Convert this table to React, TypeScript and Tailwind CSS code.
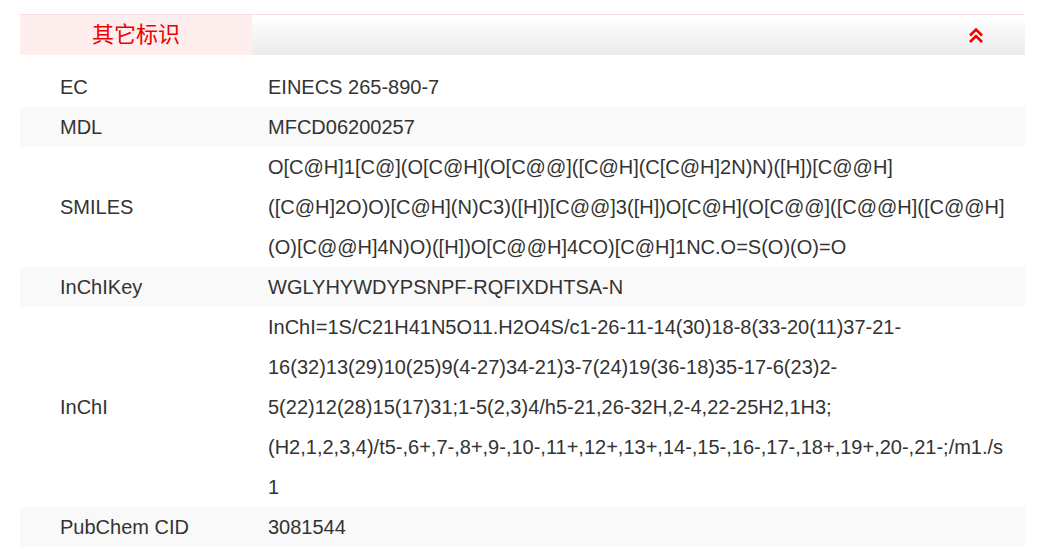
import React from 'react';

interface Row {
  label: string;
  value: string;
}

const rows: Row[] = [
  { label: 'EC', value: 'EINECS 265-890-7' },
  { label: 'MDL', value: 'MFCD06200257' },
  {
    label: 'SMILES',
    value:
      'O[C@H]1[C@](O[C@H](O[C@@]([C@H](C[C@H]2N)N)([H])[C@@H]([C@H]2O)O)[C@H](N)C3)([H])[C@@]3([H])O[C@H](O[C@@]([C@@H]([C@@H](O)[C@@H]4N)O)([H])O[C@@H]4CO)[C@H]1NC.O=S(O)(O)=O',
  },
  { label: 'InChIKey', value: 'WGLYHYWDYPSNPF-RQFIXDHTSA-N' },
  {
    label: 'InChI',
    value:
      'InChI=1S/C21H41N5O11.H2O4S/c1-26-11-14(30)18-8(33-20(11)37-21-16(32)13(29)10(25)9(4-27)34-21)3-7(24)19(36-18)35-17-6(23)2-5(22)12(28)15(17)31;1-5(2,3)4/h5-21,26-32H,2-4,22-25H2,1H3;(H2,1,2,3,4)/t5-,6+,7-,8+,9-,10-,11+,12+,13+,14-,15-,16-,17-,18+,19+,20-,21-;/m1./s1',
  },
  { label: 'PubChem CID', value: '3081544' },
];

const ChevronsUp = () => (
  <svg width="16" height="17" viewBox="0 0 16 17" fill="none">
    <path d="M2 8.5 L8 2.5 L14 8.5" stroke="#ee0000" strokeWidth="2.6" />
    <path d="M2 15 L8 9 L14 15" stroke="#ee0000" strokeWidth="2.6" />
  </svg>
);

export default function App() {
  return (
    <div className="bg-white min-h-[559px] pt-[14px] pl-5" style={{ fontFamily: '"Liberation Sans", Arial, sans-serif' }}>
      <div className="w-[1005px] border-t border-[#ffdcdc]">
        {/* Header */}
        <div className="flex h-10">
          <div
            className="w-[232px] bg-[#ffeeee] flex items-center justify-center pb-[5px] text-[22px] text-[#ee0000]"
            style={{ fontFamily: '"Noto Sans CJK SC", "Liberation Sans", sans-serif' }}
          >
            其它标识
          </div>
          <div className="flex-1 bg-gradient-to-b from-white to-[#ebebeb] flex items-center justify-end pr-[41px]">
            <ChevronsUp />
          </div>
        </div>

        {/* Rows */}
        <div className="mt-3 text-[20px] text-[#333333] leading-10">
          {rows.map((row, i) => (
            <div key={row.label} className={`flex ${i % 2 === 1 ? 'bg-[#f9f9f9]' : 'bg-white'}`}>
              <div className="w-[248px] shrink-0 pl-10 flex items-center">{row.label}</div>
              <div className="w-[737px] shrink-0 break-words">{row.value}</div>
            </div>
          ))}
        </div>
      </div>
    </div>
  );
}
